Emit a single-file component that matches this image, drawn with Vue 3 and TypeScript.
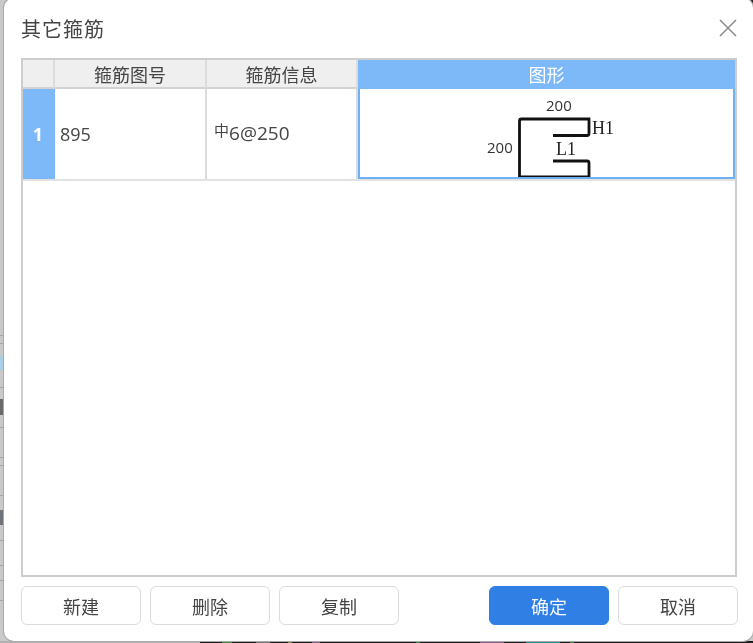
<script setup lang="ts">
const actions = ['新建', '删除', '复制']
const lineTops = [335, 343, 387, 427, 457, 465, 495, 540, 565, 580, 600]
</script>

<template>
  <div class="page">
    <div class="backdrop" aria-hidden="true">
      <i v-for="top in lineTops" :key="top" class="sideLine" :style="{ top: top + 'px' }"></i>
      <i class="frag fragBlue"></i>
      <i class="frag fragDark1"></i>
      <i class="frag fragDark2"></i>
      <i class="taskbar"></i>
      <i class="corner"></i>
    </div>
    <section class="dialog">
      <header class="head">
        <h1 class="title">其它箍筋</h1>
        <svg class="close" width="18" height="18" viewBox="0 0 18 18">
          <path d="M1 1 L17 17 M17 1 L1 17" stroke="#8f8f8f" stroke-width="1.6" fill="none" />
        </svg>
      </header>
      <div class="tableBox">
        <div class="row headRow">
          <div class="cell numCell"></div>
          <div class="cell col1">箍筋图号</div>
          <div class="cell col2">箍筋信息</div>
          <div class="cell col3 activeHead">图形</div>
        </div>
        <div class="row bodyRow">
          <div class="cell numCell activeNum">1</div>
          <div class="cell col1 value">895</div>
          <div class="cell col2 value info"><span class="dia">中</span>6@250</div>
          <div class="cell col3 shapeCell">
            <svg class="shape" width="160" height="91" viewBox="0 0 160 91">
              <path d="M95 46.5 H129 Q131 46.5 131 44.5 V30 H63.5 Q61.5 30 61.5 32 V88 H131 V74 Q131 72 129 72 H95" fill="none" />
              <text x="88" y="22" class="dim">200</text>
              <text x="29" y="64" class="dim">200</text>
              <text x="134" y="45" class="mark">H1</text>
              <text x="98" y="66" class="mark">L1</text>
            </svg>
          </div>
        </div>
      </div>
      <footer class="foot">
        <button v-for="label in actions" :key="label" class="btn" type="button">{{ label }}</button>
        <span class="spacer"></span>
        <button class="btn primary" type="button">确定</button>
        <button class="btn" type="button">取消</button>
      </footer>
    </section>
  </div>
</template>

<style scoped>
.page {
  position: relative;
  width: 753px;
  height: 643px;
  overflow: hidden;
  background: #c9c9c9;
  font-family: "Noto Sans CJK SC", "Noto Sans", sans-serif;
  color: #3c3c3c;
}
.backdrop {
  position: absolute;
  inset: 0;
}
.sideLine {
  position: absolute;
  left: 0;
  width: 4px;
  height: 1px;
  background: #a5a5a5;
}
.frag {
  position: absolute;
  left: 0;
  width: 3px;
}
.fragBlue {
  top: 356px;
  height: 14px;
  background: #a9cfe6;
}
.fragDark1 {
  top: 399px;
  height: 16px;
  background: #6a6a6a;
}
.fragDark2 {
  top: 510px;
  height: 15px;
  background: #70747a;
}
.taskbar {
  position: absolute;
  left: 0;
  right: 0;
  bottom: 0;
  height: 2px;
  background: linear-gradient(90deg,
    #b2b2b2 0 200px, #1c1c1c 200px 222px, #3d8a3d 222px 232px, #1c1c1c 232px 256px,
    #777 256px 270px, #1c1c1c 270px 288px, #8a8a3d 288px 292px, #1c1c1c 292px 312px,
    #885a8a 312px 320px, #1c1c1c 320px 416px, #2f8a4a 416px 420px, #1c1c1c 420px 480px,
    #8a5a88 480px 504px, #1c1c1c 504px 526px, #2a8a8a 526px 560px, #1c1c1c 560px 570px,
    #3d8a3d 570px 574px, #1c1c1c 574px);
}
.corner {
  position: absolute;
  right: -6px;
  top: -8px;
  width: 18px;
  height: 14px;
  border-radius: 50%;
  background: #222;
}
.dialog {
  position: absolute;
  left: 4px;
  top: -2px;
  width: 749px;
  height: 643px;
  box-sizing: border-box;
  padding: 0 15px 16px 17px;
  display: flex;
  flex-direction: column;
  background: #fff;
  border-radius: 10px;
  box-shadow: 0 0 0 1px #a9a9a9;
  filter: blur(0.35px);
}
.head {
  height: 60px;
  flex: none;
  display: flex;
  align-items: center;
  justify-content: space-between;
  padding-right: 1px;
}
.title {
  margin: 0;
  font-size: 20px;
  font-weight: 400;
  letter-spacing: 1px;
  color: #444;
}
.tableBox {
  flex: 1;
  min-height: 0;
  margin-right: 1px;
  border: 2px solid #cdcdcd;
  box-sizing: border-box;
}
.row {
  display: flex;
}
.headRow {
  height: 29px;
  background: #efefef;
  font-size: 18px;
}
.bodyRow {
  height: 92px;
  border-bottom: 2px solid #e2e2e2;
  box-sizing: border-box;
}
.cell {
  box-sizing: border-box;
  display: flex;
  align-items: center;
  justify-content: center;
  border-right: 2px solid #dcdcdc;
  color: #444;
}
.headRow .cell {
  border-bottom: 2px solid #d2d2d2;
}
.numCell {
  width: 32px;
  flex: none;
}
.col1 {
  width: 152px;
  flex: none;
}
.col2 {
  width: 151px;
  flex: none;
}
.col3 {
  flex: 1;
  border-right: 0;
}
.headRow .activeHead {
  background: #7db9f9;
  color: #fff;
  border-bottom-color: #7db9f9;
}
.activeNum {
  background: #7db9f9;
  color: #fff;
  font-family: "Open Sans", sans-serif;
  font-size: 18px;
  font-weight: 700;
  border-right-color: #7db9f9;
}
.value {
  justify-content: flex-start;
  padding-left: 5px;
  font-size: 18px;
  font-family: "Open Sans", "Noto Sans", sans-serif;
}
.info {
  padding-left: 7px;
  padding-bottom: 3px;
  font-size: 19px;
}
.dia {
  font-family: "Noto Sans CJK SC", sans-serif;
  font-size: 15px;
  transform: translateY(-3px);
}
.shapeCell {
  display: block;
  border: 2px solid #6fb0f3;
  border-top: 0;
  overflow: hidden;
}
.shape {
  display: block;
  margin-left: 98px;
}
.shape path {
  stroke: #111;
  stroke-width: 2.8;
}
.dim {
  font-family: "Open Sans", sans-serif;
  font-size: 15px;
  fill: #333;
}
.mark {
  font-family: "Liberation Serif", serif;
  font-size: 18px;
  fill: #222;
}
.foot {
  flex: none;
  display: flex;
  gap: 9px;
  padding-top: 9px;
}
.spacer {
  flex: 1;
}
.btn {
  width: 120px;
  height: 39px;
  flex: none;
  box-sizing: border-box;
  border: 1.5px solid #dcdcdc;
  border-radius: 6px;
  background: #fff;
  color: #444;
  font: 400 18px "Noto Sans CJK SC", sans-serif;
}
.primary {
  background: #2f7fe4;
  border-color: #2f7fe4;
  color: #f4f8fe;
}
</style>
